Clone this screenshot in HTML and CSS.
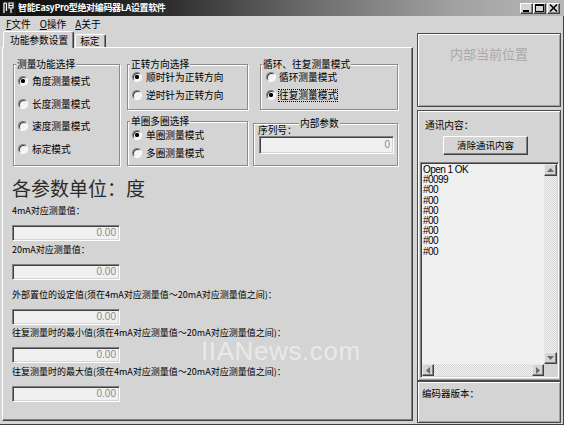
FILE: index.html
```html
<!DOCTYPE html>
<html lang="zh-CN">
<head>
<meta charset="utf-8">
<title>智能EasyPro型绝对编码器LA设置软件</title>
<link rel="stylesheet" href="styles.css">
</head>
<body>
<div class="window">
  <div class="titlebar">
    <svg class="appicon" width="14" height="14" viewBox="0 0 14 14">
      <rect x="0" y="0" width="14" height="14" fill="#1a1a1a"/>
      <path d="M2 2v10M4.5 2v8M2 2h2.5M7 2h4v5H7zM9 7v5M7 4.5h4" stroke="#fff" stroke-width="1.2" fill="none"/>
    </svg>
    <span class="title">智能EasyPro型绝对编码器LA设置软件</span>
    <div class="capbtns">
      <span class="capbtn"><svg width="9" height="8" viewBox="0 0 9 8"><rect x="1" y="6" width="6" height="2" fill="#000"/></svg></span>
      <span class="capbtn"><svg width="9" height="8" viewBox="0 0 9 8"><rect x="0.5" y="0.5" width="8" height="7" fill="none" stroke="#000"/><rect x="0" y="0" width="9" height="2" fill="#000"/></svg></span>
      <span class="capbtn close"><svg width="9" height="8" viewBox="0 0 9 8"><path d="M1 0.5l7 7M8 0.5l-7 7" stroke="#000" stroke-width="1.5"/></svg></span>
    </div>
  </div>
  <div class="menubar">
    <span class="menu"><u>F</u>文件</span>
    <span class="menu"><u>O</u>操作</span>
    <span class="menu"><u>A</u>关于</span>
  </div>
  <div class="client">
    <div class="leftpane">
      <div class="tabs">
        <div class="tab active">功能参数设置</div>
        <div class="tab">标定</div>
      </div>
      <div class="panel">
        <div class="toprow">
          <div class="group g-mode">
            <div class="legend">测量功能选择</div>
            <div class="row tall"><span class="radio on"></span><span>角度测量模式</span></div>
            <div class="row tall"><span class="radio"></span><span>长度测量模式</span></div>
            <div class="row tall"><span class="radio"></span><span>速度测量模式</span></div>
            <div class="row tall"><span class="radio"></span><span>标定模式</span></div>
          </div>
          <div class="col col-b">
            <div class="group g-dir">
              <div class="legend lg-tight">正转方向选择</div>
              <div class="row"><span class="radio on"></span><span>顺时针为正转方向</span></div>
              <div class="row"><span class="radio"></span><span>逆时针为正转方向</span></div>
            </div>
            <div class="group g-turn">
              <div class="legend lg-mid">单圈多圈选择</div>
              <div class="row"><span class="radio on"></span><span>单圈测量模式</span></div>
              <div class="row"><span class="radio"></span><span>多圈测量模式</span></div>
            </div>
          </div>
          <div class="col col-c">
            <div class="group g-cycle">
              <div class="legend lg-tight lg-c">循环、往复测量模式</div>
              <div class="row rc"><span class="radio"></span><span>循环测量模式</span></div>
              <div class="row rc"><span class="radio on"></span><span class="focus">往复测量模式</span></div>
            </div>
            <div class="group g-inner">
              <div class="legend lg-inner">内部参数</div>
              <div class="flabel serial">序列号：</div>
              <div class="edit wide">0</div>
            </div>
          </div>
        </div>
        <div class="unit">各参数单位：度</div>
        <div class="fields">
          <div class="field">
            <div class="flabel">4mA对应测量值：</div>
            <div class="edit">0.00</div>
          </div>
          <div class="field">
            <div class="flabel">20mA对应测量值：</div>
            <div class="edit">0.00</div>
          </div>
          <div class="field gap-lg">
            <div class="flabel">外部置位的设定值(须在4mA对应测量值～20mA对应测量值之间)：</div>
            <div class="edit">0.00</div>
          </div>
          <div class="field gap-sm">
            <div class="flabel">往复测量时的最小值(须在4mA对应测量值～20mA对应测量值之间)：</div>
            <div class="edit">0.00</div>
          </div>
          <div class="field">
            <div class="flabel">往复测量时的最大值(须在4mA对应测量值～20mA对应测量值之间)：</div>
            <div class="edit">0.00</div>
          </div>
        </div>
        <div class="watermark">IIANews.com</div>
      </div>
    </div>
    <div class="rightpane">
      <div class="box pos">内部当前位置</div>
      <div class="box comm">
        <div class="comm-label">通讯内容：</div>
        <div class="button">清除通讯内容</div>
        <div class="listbox">
          <div class="list-items">
            <div>Open 1 OK</div>
            <div>#0099</div>
            <div>#00</div>
            <div>#00</div>
            <div>#00</div>
            <div>#00</div>
            <div>#00</div>
            <div>#00</div>
            <div>#00</div>
          </div>
          <div class="vscroll">
            <span class="sbtn"><svg width="7" height="4" viewBox="0 0 7 4"><path d="M3.5 0L7 4H0z" fill="#6a6a6a"/></svg></span>
            <span class="track"></span>
            <span class="sbtn"><svg width="7" height="4" viewBox="0 0 7 4"><path d="M0 0h7L3.5 4z" fill="#6a6a6a"/></svg></span>
          </div>
          <div class="hscroll">
            <span class="sbtn"><svg width="4" height="7" viewBox="0 0 4 7"><path d="M4 0v7L0 3.5z" fill="#6a6a6a"/></svg></span>
            <span class="track"></span>
            <span class="sbtn"><svg width="4" height="7" viewBox="0 0 4 7"><path d="M0 0l4 3.5L0 7z" fill="#6a6a6a"/></svg></span>
          </div>
          <div class="corner"></div>
        </div>
      </div>
      <div class="box ver">编码器版本：</div>
    </div>
  </div>
</div>
</body>
</html>
```

FILE: styles.css
```css
* { box-sizing: border-box; }

body {
  margin: 0;
  width: 564px;
  height: 425px;
  overflow: hidden;
  background: #d4d4d4;
  font-family: "Noto Sans CJK SC", "Liberation Sans", sans-serif;
  font-size: 9.7px;
  color: #000;
}

.window {
  width: 564px;
  height: 425px;
  display: flex;
  flex-direction: column;
  box-shadow: inset 0 -1px #404040, inset -1px 0 #404040;
}

/* title bar */
.titlebar {
  height: 16px;
  flex: none;
  display: flex;
  align-items: center;
  padding-left: 2px;
  background: linear-gradient(90deg, #0c0c0c 0%, #2e2e2e 30%, #6c6c6c 55%, #a0a0a0 80%, #b8b8b8 100%);
  color: #fff;
}
.appicon { flex: none; }
.title {
  margin-left: 2px;
  font-weight: 700;
  font-size: 9px;
  letter-spacing: -0.35px;
  line-height: 14px;
  white-space: nowrap;
}
.capbtns {
  margin-left: auto;
  margin-right: 4px;
  display: flex;
}
.capbtn {
  width: 13px;
  height: 11px;
  display: flex;
  align-items: center;
  justify-content: center;
  background: #d4d4d4;
  border: 1px solid;
  border-color: #fff #404040 #404040 #fff;
  box-shadow: inset -1px -1px #808080;
}
.capbtn.close { margin-left: 1px; }

/* menu */
.menubar {
  height: 15px;
  flex: none;
  display: flex;
  align-items: center;
  gap: 9px;
  padding-left: 6px;
  line-height: 12px;
}
.menu u { text-decoration: underline; text-underline-offset: 1px; }

/* client */
.client {
  flex: 1;
  display: flex;
  align-items: flex-start;
}
.leftpane {
  margin-left: 2px;
  width: 411px;
  display: flex;
  flex-direction: column;
}
.tabs {
  height: 16px;
  display: flex;
  align-items: flex-end;
  padding-left: 1px;
}
.tab {
  height: 13px;
  padding: 0 5px 0 4px;
  line-height: 12px;
  border-top: 1px solid #fff;
  border-left: 1px solid #fff;
  border-right: 1px solid #404040;
  box-shadow: inset -1px 0 #808080;
  border-radius: 2px 2px 0 0;
  margin-left: 1px;
}
.tab.active {
  position: relative;
  z-index: 1;
  height: 17px;
  margin-bottom: -1px;
  margin-left: 0;
  padding: 2px 5px 0 6px;
  background: #d4d4d4;
}

.panel {
  position: relative;
  height: 374px;
  border-top: 1px solid #fff;
  border-left: 1px solid #fff;
  border-right: 1px solid #404040;
  border-bottom: 1px solid #404040;
  box-shadow: inset -1px -1px #808080;
  padding: 16px 0 0 10px;
}

.toprow {
  display: flex;
  align-items: flex-start;
}
.col { display: flex; flex-direction: column; }
.col-b { margin-left: 7px; }
.col-c { margin-left: 5px; }

.group {
  border: 1px solid #8c8c8c;
  box-shadow: inset 1px 1px #fff, 1px 1px #fff;
}
.legend {
  width: max-content;
  height: 12px;
  line-height: 12px;
  margin: -7px 0 0 2px;
  padding: 0 1px;
  background: #d4d4d4;
}
.lg-tight { margin-bottom: -2px; }
.lg-mid { margin-bottom: -1px; }
.lg-c { margin-left: 1px; }
.lg-inner { margin-left: 45px; margin-bottom: -5px; }

.g-mode { width: 107px; height: 102px; }
.g-dir { width: 121px; height: 46px; }
.g-turn { width: 121px; height: 45px; margin-top: 11px; }
.g-cycle { width: 138px; height: 46px; margin-left: 7px; }
.g-inner { width: 145px; height: 43px; margin-top: 13px; }

.row {
  height: 18px;
  display: flex;
  align-items: center;
  gap: 4px;
  padding-left: 4px;
  white-space: nowrap;
}
.row.tall { height: 22.5px; }
.row.rc { padding-left: 5px; gap: 3px; }

.radio {
  flex: none;
  width: 10px;
  height: 10px;
  border-radius: 50%;
  border: 1px solid;
  border-color: #808080 #fff #fff #808080;
  background: #f4f4f4;
  box-shadow: inset 1px 1px #404040;
}
.radio.on {
  background: radial-gradient(circle at 50% 50%, #000 0 1.8px, #f4f4f4 2.4px);
}
.focus {
  outline: 1px dotted #000;
  outline-offset: 0;
  line-height: 11px;
}

.flabel {
  height: 12px;
  line-height: 12px;
  font-size: 9px;
  white-space: nowrap;
}
.serial { padding-left: 4px; font-size: 9.7px; }

.edit {
  width: 108px;
  height: 16px;
  background: #f0f0f0;
  border: 1px solid;
  border-color: #808080 #fff #fff #808080;
  box-shadow: inset 1px 1px #404040, inset -1px -1px #d4d4d4;
  text-align: right;
  color: #8a8a8a;
  font-family: "Liberation Sans", sans-serif;
  font-size: 10px;
  line-height: 14px;
  padding-right: 3px;
}
.edit.wide {
  width: 135px;
  height: 18px;
  line-height: 16px;
  margin-left: 5px;
}

.unit {
  margin: 10px 0 0 -1px;
  height: 24px;
  line-height: 24px;
  font-size: 19px;
  color: #2a2a2a;
}

.fields { margin-left: -1px; }
.field { margin-top: 3px; }
.field:first-child { margin-top: 5px; }
.field.gap-lg { margin-top: 9px; }
.field.gap-sm { margin-top: 2px; }
.field .edit { margin-top: 8px; }

.watermark {
  position: absolute;
  left: 198px;
  top: 288px;
  font-family: "Liberation Sans", sans-serif;
  font-size: 26px;
  letter-spacing: 0.6px;
  color: rgba(255, 255, 255, 0.5);
  pointer-events: none;
}

/* right pane */
.rightpane {
  margin: 2px 0 0 4px;
  width: 144px;
  display: flex;
  flex-direction: column;
}
.box {
  border: 1px solid #4a4a4a;
  box-shadow: inset 1px 1px #fff, inset -1px -1px #a0a0a0;
}
.pos {
  height: 74px;
  padding-top: 12px;
  text-align: center;
  font-size: 13px;
  line-height: 16px;
  color: #a9a9a9;
}
.comm {
  height: 271px;
  margin-top: 3px;
  padding-top: 8px;
}
.comm-label {
  margin-left: 7px;
  height: 12px;
  line-height: 12px;
}
.button {
  margin: 5px 0 0 25px;
  width: 85px;
  height: 19px;
  text-align: center;
  line-height: 16px;
  border: 1px solid;
  border-color: #fff #404040 #404040 #fff;
  box-shadow: inset -1px -1px #808080;
  font-size: 9.5px;
}
.listbox {
  margin: 7px 0 0 2px;
  width: 139px;
  height: 216px;
  background: #f0f0f0;
  border: 1px solid;
  border-color: #808080 #fff #fff #808080;
  box-shadow: inset 1px 1px #404040, inset -1px -1px #d4d4d4;
  padding: 1px;
  display: grid;
  grid-template-columns: 1fr 13px;
  grid-template-rows: 1fr 12px;
}
.list-items {
  padding: 1px 0 0 1px;
  font-family: "Liberation Sans", sans-serif;
  font-size: 10px;
  letter-spacing: -0.55px;
  line-height: 10.2px;
  overflow: hidden;
}
.vscroll, .hscroll {
  display: flex;
}
.vscroll { flex-direction: column; }
.track {
  flex: 1;
  background: repeating-conic-gradient(#f4f4f4 0 25%, #d4d4d4 0 50%) 0 0 / 2px 2px;
}
.sbtn {
  flex: none;
  width: 13px;
  height: 12px;
  display: flex;
  align-items: center;
  justify-content: center;
  background: #d4d4d4;
  border: 1px solid;
  border-color: #e8e8e8 #404040 #404040 #e8e8e8;
  box-shadow: inset -1px -1px #808080;
}
.hscroll .sbtn { width: 12px; height: 12px; }
.corner { background: #d4d4d4; }

.ver {
  height: 42px;
  padding: 5px 0 0 4px;
  line-height: 12px;
  font-size: 9.5px;
}
```
